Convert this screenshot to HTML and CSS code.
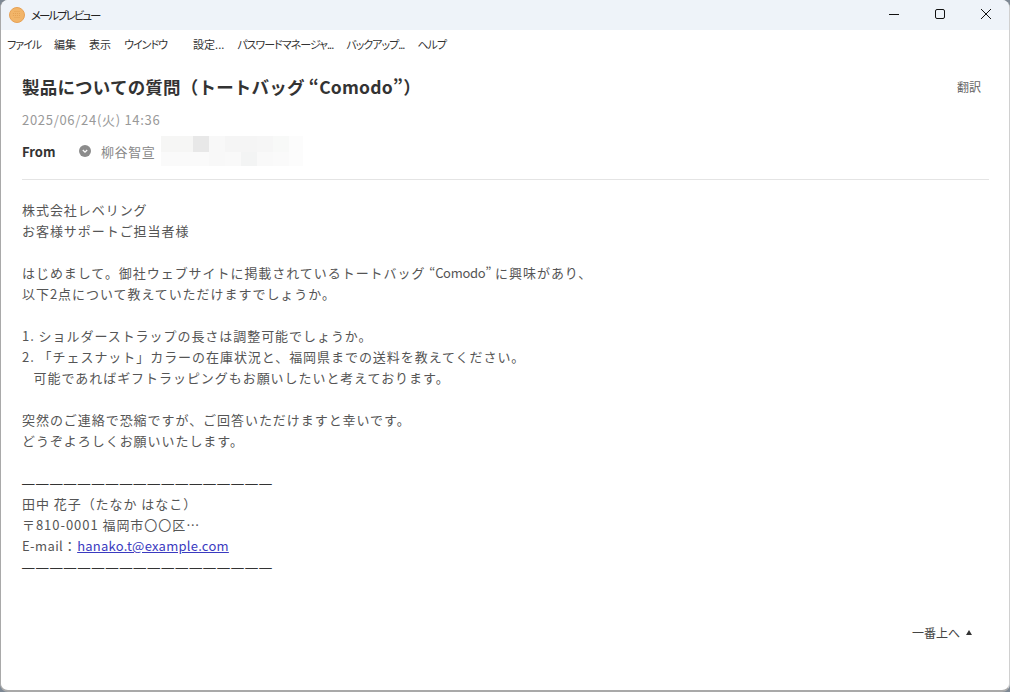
FILE: index.html
```html
<!DOCTYPE html>
<html lang="ja">
<head>
<meta charset="utf-8">
<title>メールプレビュー</title>
<link rel="stylesheet" href="styles.css">
</head>
<body>
<div class="window">
  <header class="titlebar">
    <svg class="app-icon" width="16" height="16" viewBox="0 0 16 16">
      <circle cx="8" cy="8" r="7.5" fill="#f2b569" stroke="#e6a155" stroke-width="1"/>
      <g fill="#e3a152">
        <circle cx="6" cy="4.5" r=".6"/><circle cx="8" cy="4.5" r=".6"/><circle cx="10" cy="4.5" r=".6"/>
        <circle cx="4.5" cy="6.5" r=".6"/><circle cx="6.5" cy="6.5" r=".6"/><circle cx="8.5" cy="6.5" r=".6"/><circle cx="10.5" cy="6.5" r=".6"/>
        <circle cx="4.5" cy="8.5" r=".6"/><circle cx="6.5" cy="8.5" r=".6"/><circle cx="8.5" cy="8.5" r=".6"/><circle cx="10.5" cy="8.5" r=".6"/>
        <circle cx="6" cy="10.5" r=".6"/><circle cx="8" cy="10.5" r=".6"/><circle cx="10" cy="10.5" r=".6"/>
      </g>
    </svg>
    <span class="app-title">メールプレビュー</span>
    <div class="win-controls">
      <svg class="win-btn" width="46" height="30" viewBox="0 0 46 30"><path d="M18 14.5h10" stroke="#111" stroke-width="1" fill="none"/></svg>
      <svg class="win-btn" width="46" height="30" viewBox="0 0 46 30"><rect x="18.5" y="9.5" width="9" height="9" rx="1.5" stroke="#111" stroke-width="1" fill="none"/></svg>
      <svg class="win-btn" width="46" height="30" viewBox="0 0 46 30"><path d="M18 9l10 10M28 9L18 19" stroke="#111" stroke-width="1" fill="none"/></svg>
    </div>
  </header>
  <nav class="menubar">
    <span class="kana">ファイル</span><span>編集</span><span>表示</span><span class="kana">ウインドウ</span>
    <span class="menu-gap">設定...</span><span class="kana">パスワードマネージャ...</span><span class="kana">バックアップ...</span><span class="kana">ヘルプ</span>
  </nav>
  <main class="mail">
    <div class="subject-row">
      <h1 class="subject">製品についての質問（トートバッグ “Comodo”）</h1>
      <span class="translate">翻訳</span>
    </div>
    <div class="date">2025/06/24(火) 14:36</div>
    <div class="from-row">
      <span class="from-label">From</span>
      <svg class="from-icon" width="12" height="12" viewBox="0 0 12 12"><circle cx="6" cy="6" r="6" fill="#8c8c8c"/><path d="M3.8 5l2.2 2.2L8.2 5" stroke="#fff" stroke-width="1.2" fill="none"/></svg>
      <span class="from-name">柳谷智宣</span>
      <div class="blurred"></div>
    </div>
    <hr class="rule">
    <div class="body-text">
      <p>株式会社レベリング<br>お客様サポートご担当者様</p>
      <p>はじめまして。御社ウェブサイトに掲載されているトートバッグ <span class="product">“Comodo”</span> に興味があり、<br>以下2点について教えていただけますでしょうか。</p>
      <p>1. ショルダーストラップの長さは調整可能でしょうか。<br>2. 「チェスナット」カラーの在庫状況と、福岡県までの送料を教えてください。<br>&nbsp;&nbsp;&nbsp;可能であればギフトラッピングもお願いしたいと考えております。</p>
      <p>突然のご連絡で恐縮ですが、ご回答いただけますと幸いです。<br>どうぞよろしくお願いいたします。</p>
      <p><span class="dash">——————————————————</span><br>田中 花子（たなか はなこ）<br>〒810-0001 福岡市〇〇区…<br><span class="mail-label">E-mail</span>：<a href="#">hanako.t@example.com</a><br><span class="dash">——————————————————</span></p>
    </div>
    <div class="to-top"><span>一番上へ</span><span class="arrow"></span></div>
  </main>
</div>
</body>
</html>
```

FILE: styles.css
```css
* { box-sizing: border-box; }
html, body { margin: 0; height: 100%; background: #7d8894; }
body { font-family: "Noto Sans CJK JP", "Noto Sans", sans-serif; color: #444; overflow: hidden; }
.window {
  width: 1010px; height: 692px;
  background: #fff;
  border-left: 1px solid #a9a9a9;
  border-right: 1px solid #d0d0d0;
  border-bottom: 2px solid #a9a9a9;
  border-radius: 8px;
  overflow: hidden;
  display: flex; flex-direction: column;
}
.titlebar {
  height: 30px; flex: none;
  background: #eef3f9;
  display: flex; align-items: center;
  padding-left: 8px;
}
.app-icon { display: block; margin-right: 6px; }
.app-title { font-size: 11.5px; color: #222; font-feature-settings: "palt"; letter-spacing: -2px; }
.win-controls { margin-left: auto; display: flex; }
.win-btn { display: block; }
.menubar {
  height: 27px; flex: none;
  display: flex; align-items: center;
  gap: 13px;
  padding-left: 6px;
  font-size: 11px; color: #333;
  font-feature-settings: "palt";
}
.kana { letter-spacing: -1px; }
.menu-gap { margin-left: 13px; }
.mail { flex: 1; padding: 0 20px 0 21px; display: flex; flex-direction: column; }
.subject-row { display: flex; align-items: center; justify-content: space-between; height: 30px; margin-top: 14px; }
.subject { margin: 0; font-size: 17.5px; font-weight: 700; color: #333; letter-spacing: 0.2px; }
.translate { font-size: 12px; color: #666; padding-right: 8px; }
.date { font-size: 13px; color: #999; margin-top: 9px; height: 20px; line-height: 20px; letter-spacing: 0.7px; }
.from-row { display: flex; align-items: center; height: 30px; margin-top: 6px; }
.from-label { font-size: 13px; font-weight: 700; color: #333; width: 57px; }
.from-icon { margin-right: 10px; }
.from-name { font-size: 13px; color: #888; letter-spacing: 0.6px; }
.blurred {
  width: 142px; height: 30px; margin-left: 6px;
  background:
    linear-gradient(90deg, #f6f6f5 0 32px, #e8e8e8 32px 48px, #f8f8f8 48px 64px, #f5f5f5 64px 96px, #f6f6f6 96px 112px, #f8f9f8 112px 128px, #fcfcfc 128px) 0 0 / 100% 16px no-repeat,
    linear-gradient(90deg, #fafafa 0 48px, #f8f8f8 48px 64px, #f9f9f9 64px 80px, #f3f4f4 80px 96px, #f9f9f9 96px 112px, #fafafa 112px 128px, #fcfcfc 128px) 0 16px / 100% 14px no-repeat;
}
.rule { width: 100%; border: 0; border-top: 1px solid #e4e4e4; margin: 13px 0 0; }
.body-text { margin-top: 19px; font-size: 13px; line-height: 21px; letter-spacing: 0.95px; color: #555; }
.body-text p { margin: 0 0 21px; white-space: nowrap; }
.body-text a { color: #3a3ac0; text-decoration: underline; letter-spacing: 0.25px; }
.product { letter-spacing: -0.3px; }
.mail-label { letter-spacing: 0.4px; }
.dash { font-family: "Liberation Sans", sans-serif; font-size: 12.5px; line-height: 1; letter-spacing: 1.45px; color: #333; }
.to-top { margin-top: auto; margin-bottom: 49px; align-self: flex-end; display: flex; align-items: center; gap: 6px; font-size: 12px; color: #444; padding-right: 17px; }
.arrow { width: 0; height: 0; border-left: 3.5px solid transparent; border-right: 3.5px solid transparent; border-bottom: 5px solid #333; }
```
